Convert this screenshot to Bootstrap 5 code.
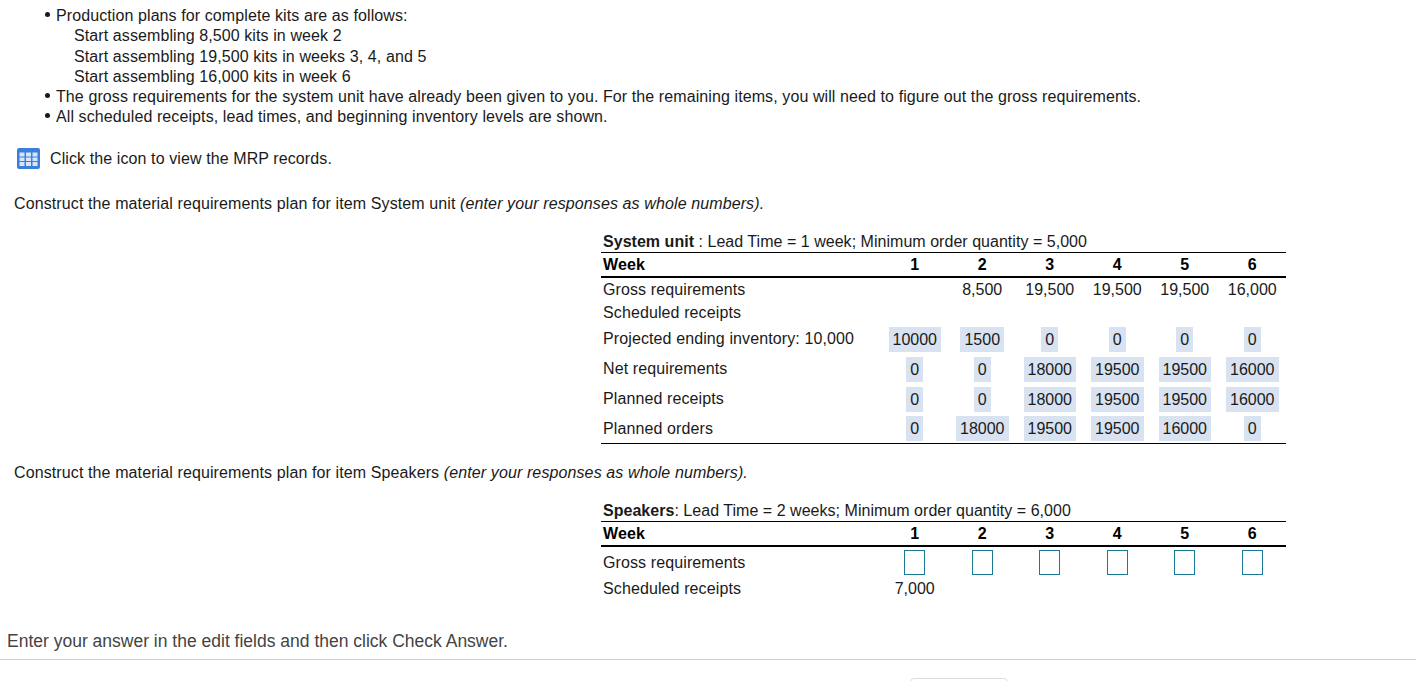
<!DOCTYPE html>
<html lang="en">
<head>
<meta charset="utf-8">
<title>MRP</title>
<link href="https://cdn.jsdelivr.net/npm/bootstrap@5.3.0/dist/css/bootstrap.min.css" rel="stylesheet">
<style>
html, body { height: 681px; overflow: hidden; }
body { font-family: "Liberation Sans", Arial, sans-serif; font-size: 16px; color: #1a1a1a; background: #fff; }
.shell { height: 681px; }
.scroller { height: 659px; padding: 6px 0 0 14px; overflow: hidden; }
.bul-list { list-style: none; margin: 0; padding: 0 0 0 28px; line-height: 20.3px; letter-spacing: .095px; }
.bul-list > li { position: relative; padding-left: 14px; }
.bul-list > li::before { content: ""; position: absolute; left: 3px; top: 6px; width: 5px; height: 5px; border-radius: 50%; background: #1a1a1a; }
.sub-line { padding-left: 18px; }
.icon-row { margin: 20.6px 0 0 3px; height: 21px; line-height: 21px; gap: 10px; letter-spacing: .1px; }
.para { line-height: 20px; margin: 0; letter-spacing: .11px; }
.para-a { margin-top: 25px; }
.para-b { margin-top: 19px; }
.mrp-wrap { margin-left: 587px; width: 685px; }
.mrp-title { line-height: 20px; padding-left: 2px; height: 20px; letter-spacing: .03px; }
.mrp-wrap-a { margin-top: 18px; }
.mrp-wrap-b { margin-top: 18px; }
table.mrp { table-layout: fixed; width: 685px; margin: 0; border-collapse: separate; border-spacing: 0; --bs-table-color: #1a1a1a; }
table.mrp th, table.mrp td { padding: 0 2px; line-height: 20px; vertical-align: middle; background: transparent; box-shadow: none; border: 0; }
table.mrp th:first-child, table.mrp td:first-child { width: 280px; text-align: left; letter-spacing: .11px; }
table.mrp th:not(:first-child), table.mrp td:not(:first-child) { text-align: center; width: 67.5px; white-space: nowrap; padding: 0; }
table.mrp thead th { height: 26px; border-top: 1.5px solid #000; border-bottom: 2.5px solid #000; font-weight: 700; color: #000; }
table.mrp .r22 td { height: 22px; }
table.mrp .r23 td { height: 23px; }
table.mrp .r30 td { height: 30px; }
table.mrp .r31 td { height: 31px; }
table.mrp .rlast td { border-bottom: 1px solid #000; }
.ans { display: inline-block; background: #d9e2f1; padding: 0 4px; line-height: 25px; height: 25px; vertical-align: middle; }
.blank { display: inline-block; width: 21px; height: 25px; border: 1.5px solid #1a7a96; background: #fff; vertical-align: middle; }
.foot-text { padding-left: 7px; font-size: 17.5px; line-height: 20px; color: #444; margin: -28px 0 0; height: 28px; position: relative; background: #fff; }
.foot { height: 22px; border-top: 1px solid #ccd0da; }
.chk { width: 98px; height: 12px; margin: 18px 0 0 910px; border: 1px solid #ddd; border-radius: 4px; background: #fff; }
</style>
</head>
<body>
<div class="shell d-flex flex-column">
  <div class="scroller">
    <ul class="bul-list">
      <li>Production plans for complete kits are as follows:
        <div class="sub-line">Start assembling 8,500 kits in week 2</div>
        <div class="sub-line">Start assembling 19,500 kits in weeks 3, 4, and 5</div>
        <div class="sub-line">Start assembling 16,000 kits in week 6</div>
      </li>
      <li>The gross requirements for the system unit have already been given to you. For the remaining items, you will need to figure out the gross requirements.</li>
      <li>All scheduled receipts, lead times, and beginning inventory levels are shown.</li>
    </ul>
    <div class="icon-row d-flex align-items-center">
      <svg width="23" height="21" viewBox="0 0 23 21" aria-hidden="true">
        <rect width="23" height="21" rx="2" fill="#3b7fdb"/>
        <g fill="#d6e5fa">
          <rect x="2.5" y="4.5" width="5" height="4"/><rect x="9" y="4.5" width="5" height="4"/><rect x="15.5" y="4.5" width="5" height="4"/>
          <rect x="2.5" y="9.5" width="5" height="3.5"/><rect x="9" y="9.5" width="5" height="3.5"/><rect x="15.5" y="9.5" width="5" height="3.5"/>
          <rect x="2.5" y="14" width="5" height="4"/><rect x="9" y="14" width="5" height="4"/><rect x="15.5" y="14" width="5" height="4"/>
        </g>
      </svg>
      <span>Click the icon to view the MRP records.</span>
    </div>
    <p class="para para-a">Construct the material requirements plan for item System unit <em>(enter your responses as whole numbers).</em></p>
    <div class="mrp-wrap mrp-wrap-a">
      <div class="mrp-title"><strong>System unit</strong> : Lead Time = 1 week; Minimum order quantity = 5,000</div>
      <table class="table table-borderless mrp">
        <thead><tr><th>Week</th><th>1</th><th>2</th><th>3</th><th>4</th><th>5</th><th>6</th></tr></thead>
        <tbody>
          <tr class="r23"><td>Gross requirements</td><td></td><td>8,500</td><td>19,500</td><td>19,500</td><td>19,500</td><td>16,000</td></tr>
          <tr class="r23"><td>Scheduled receipts</td><td></td><td></td><td></td><td></td><td></td><td></td></tr>
          <tr class="r30"><td>Projected ending inventory: 10,000</td><td><span class="ans">10000</span></td><td><span class="ans">1500</span></td><td><span class="ans">0</span></td><td><span class="ans">0</span></td><td><span class="ans">0</span></td><td><span class="ans">0</span></td></tr>
          <tr class="r30"><td>Net requirements</td><td><span class="ans">0</span></td><td><span class="ans">0</span></td><td><span class="ans">18000</span></td><td><span class="ans">19500</span></td><td><span class="ans">19500</span></td><td><span class="ans">16000</span></td></tr>
          <tr class="r30"><td>Planned receipts</td><td><span class="ans">0</span></td><td><span class="ans">0</span></td><td><span class="ans">18000</span></td><td><span class="ans">19500</span></td><td><span class="ans">19500</span></td><td><span class="ans">16000</span></td></tr>
          <tr class="r30 rlast"><td>Planned orders</td><td><span class="ans">0</span></td><td><span class="ans">18000</span></td><td><span class="ans">19500</span></td><td><span class="ans">19500</span></td><td><span class="ans">16000</span></td><td><span class="ans">0</span></td></tr>
        </tbody>
      </table>
    </div>
    <p class="para para-b">Construct the material requirements plan for item Speakers <em>(enter your responses as whole numbers).</em></p>
    <div class="mrp-wrap mrp-wrap-b">
      <div class="mrp-title"><strong>Speakers</strong>: Lead Time = 2 weeks; Minimum order quantity = 6,000</div>
      <table class="table table-borderless mrp">
        <thead><tr><th>Week</th><th>1</th><th>2</th><th>3</th><th>4</th><th>5</th><th>6</th></tr></thead>
        <tbody>
          <tr class="r31"><td>Gross requirements</td><td><span class="blank"></span></td><td><span class="blank"></span></td><td><span class="blank"></span></td><td><span class="blank"></span></td><td><span class="blank"></span></td><td><span class="blank"></span></td></tr>
          <tr class="r22"><td>Scheduled receipts</td><td>7,000</td><td></td><td></td><td></td><td></td><td></td></tr>
        </tbody>
      </table>
    </div>
  </div>
  <p class="foot-text">Enter your answer in the edit fields and then click Check Answer.</p>
  <div class="foot"><div class="chk"></div></div>
</div>
<script src="https://cdn.jsdelivr.net/npm/bootstrap@5.3.0/dist/js/bootstrap.bundle.min.js"></script>
</body>
</html>
